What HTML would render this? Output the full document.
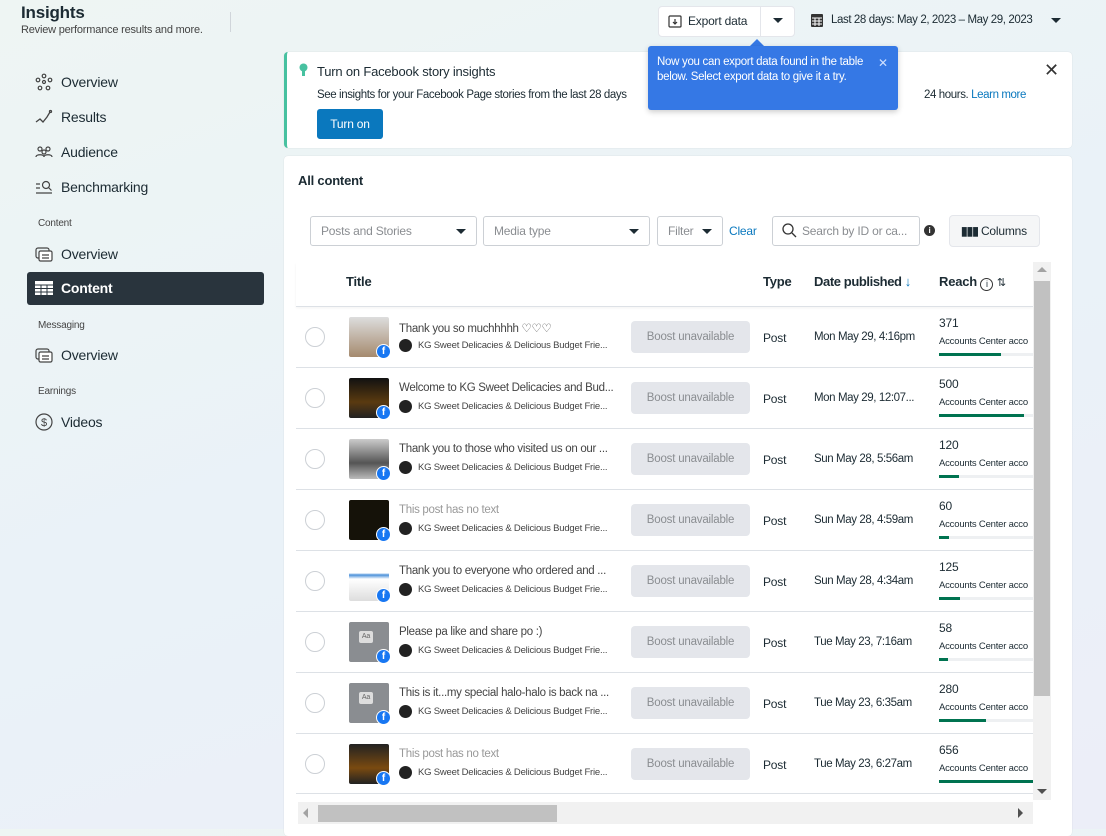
<!DOCTYPE html>
<html><head><meta charset="utf-8"><style>
*{box-sizing:border-box;margin:0;padding:0}
body{width:1106px;height:829px;overflow:hidden;font-family:"Liberation Sans",sans-serif;background:linear-gradient(160deg,#eef5f3 0%,#eaf2f8 50%,#eceef8 100%);color:#1c2b33;position:relative;letter-spacing:-0.2px}
.abs{position:absolute}
.nav{position:absolute;left:35px;font-size:14px;color:#1c2b33;display:flex;align-items:center;gap:8px}
.nav svg{width:18px;height:18px}
.sec{position:absolute;left:38px;font-size:10px;color:#444}
.card{position:absolute;background:#fff;border-radius:4px;box-shadow:0 0 1px rgba(0,0,0,.15)}
.sel{position:absolute;top:216px;height:30px;border:1px solid #ccd0d5;border-radius:3px;font-size:12px;color:#8a8d91;padding:7px 10px;background:#fff}
.sel:after{content:"";position:absolute;right:10px;top:12px;border:5px solid transparent;border-top:5px solid #1c2b33;border-bottom:0}
.row{position:absolute;left:296px;width:737px;height:61px;border-top:1px solid #dde1e6;font-size:12px}
.row .rad{position:absolute;left:9px;top:20px;width:20px;height:20px;border:1px solid #ccd0d5;border-radius:50%}
.row .th{position:absolute;left:53px;top:10px;width:40px;height:40px;border-radius:2px}
.row .fb{position:absolute;left:80px;top:37px;width:15px;height:15px;border-radius:50%;background:#1877f2;border:1.5px solid #fff;color:#fff;font-size:10px;font-weight:bold;text-align:center;line-height:13px}
.row .t1{position:absolute;left:103px;top:14px;color:#444;white-space:nowrap;font-size:11.5px;letter-spacing:-0.3px}
.row .t1.g{color:#999}
.row .t2{position:absolute;left:103px;top:32px;font-size:9.5px;color:#444;white-space:nowrap;display:flex;align-items:center;gap:6px;letter-spacing:-0.2px}
.row .t2 i{display:inline-block;width:13px;height:13px;border-radius:50%;background:#222}
.row .boost{position:absolute;left:335px;top:14px;width:119px;height:32px;background:#e4e6eb;border-radius:4px;color:#8a8d91;text-align:center;line-height:32px;font-size:11.5px}
.row .ty{position:absolute;left:467px;top:24px;color:#1c2b33}
.row .dt{position:absolute;left:518px;top:24px;color:#1c2b33;white-space:nowrap;font-size:11.5px;letter-spacing:-0.4px}
.row .rc{position:absolute;left:643px;top:9px;color:#1c2b33}
.row .ac{position:absolute;left:643px;top:29px;font-size:9.5px;white-space:nowrap;width:94px;overflow:hidden}
.row .bar{position:absolute;left:643px;top:46px;width:94px;height:3px;background:#eef0f2}
.row .bar b{display:block;height:3px;background:#007350}
</style></head><body>
<div class="abs" style="left:21px;top:3px;font-size:17px;font-weight:bold">Insights</div>
<div class="abs" style="left:21px;top:24px;font-size:11px;color:#444">Review performance results and more.</div>
<div class="abs" style="left:230px;top:12px;width:1px;height:20px;background:#d0d5da"></div>

<div class="nav" style="top:73px"><svg viewBox="0 0 18 18" fill="none" stroke="#444" stroke-width="1.2"><circle cx="9" cy="3" r="1.8"/><circle cx="3" cy="7" r="1.8"/><circle cx="15" cy="7" r="1.8"/><circle cx="5" cy="15" r="1.8"/><circle cx="13" cy="15" r="1.8"/><circle cx="9" cy="9" r="1.5"/></svg><span>Overview</span></div>
<div class="nav" style="top:108px"><svg viewBox="0 0 18 18" fill="none" stroke="#444" stroke-width="1.3"><path d="M1 14l4-3 3 3 4-5 3-5"/><circle cx="15.5" cy="3.5" r="1"/></svg><span>Results</span></div>
<div class="nav" style="top:143px"><svg viewBox="0 0 18 18" fill="none" stroke="#444" stroke-width="1.2"><circle cx="5" cy="6" r="2"/><circle cx="13" cy="6" r="2"/><circle cx="9" cy="9" r="2"/><path d="M1 14c0-3 8-3 8 0M9 14c0-3 8-3 8 0"/></svg><span>Audience</span></div>
<div class="nav" style="top:178px"><svg viewBox="0 0 18 18" fill="none" stroke="#444" stroke-width="1.2"><path d="M1 6h4M1 10h4M1 15h16"/><circle cx="11" cy="7" r="3.5"/><path d="M13.5 9.5l3 3"/></svg><span>Benchmarking</span></div>
<div class="sec" style="top:218px">Content</div>
<div class="nav" style="top:245px"><svg viewBox="0 0 18 18" fill="none" stroke="#444" stroke-width="1.2"><rect x="1" y="3" width="13" height="10" rx="2"/><rect x="4" y="6" width="13" height="10" rx="1.5" fill="#fff"/><path d="M7 10h7M7 13h7"/></svg><span>Overview</span></div>
<div class="abs" style="left:27px;top:272px;width:237px;height:33px;background:#29343d;border-radius:3px"></div>
<div class="nav" style="top:279px;color:#fff;font-weight:bold"><svg viewBox="0 0 18 18"><rect x="0" y="2" width="18" height="14" fill="#fff"/><path d="M0 6h18M0 9.5h18M0 13h18M6 6v10M12 6v10" stroke="#29343d" stroke-width="1"/></svg><span>Content</span></div>
<div class="sec" style="top:320px">Messaging</div>
<div class="nav" style="top:346px"><svg viewBox="0 0 18 18" fill="none" stroke="#444" stroke-width="1.2"><rect x="1" y="3" width="13" height="10" rx="2"/><rect x="4" y="6" width="13" height="10" rx="1.5" fill="#fff"/><path d="M7 10h7M7 13h7"/></svg><span>Overview</span></div>
<div class="sec" style="top:386px">Earnings</div>
<div class="nav" style="top:413px"><svg viewBox="0 0 18 18" fill="none" stroke="#444" stroke-width="1.2"><circle cx="9" cy="9" r="8"/><text x="9" y="13" font-size="11" text-anchor="middle" fill="#444" stroke="none" font-family="Liberation Sans">$</text></svg><span>Videos</span></div>

<div class="abs" style="left:658px;top:6px;width:137px;height:31px;background:#fff;border:1px solid #e4e6eb;border-radius:4px"></div>
<div class="abs" style="left:760px;top:6px;width:1px;height:31px;background:#e4e6eb"></div>
<svg class="abs" style="left:668px;top:14px" width="14" height="14" viewBox="0 0 14 14" fill="none" stroke="#333" stroke-width="1.2"><rect x="1" y="2" width="12" height="11" rx="1"/><path d="M7 5v5M5 8l2 2 2-2"/></svg>
<div class="abs" style="left:688px;top:14px;font-size:12px;color:#1c2b33">Export data</div>
<div class="abs" style="left:773px;top:18px;border:5px solid transparent;border-top:5px solid #1c2b33"></div>
<svg class="abs" style="left:811px;top:13px" width="12" height="14" viewBox="0 0 12 14"><rect x="0" y="1" width="12" height="13" rx="1" fill="#333"/><path d="M1 5h10M1 8h10M1 11h10M4 5v8M8 5v8" stroke="#fff" stroke-width="1"/></svg>
<div class="abs" style="left:831px;top:14px;font-size:11.5px;color:#1c2b33;letter-spacing:-0.4px">Last 28 days: May 2, 2023 – May 29, 2023</div>
<div class="abs" style="left:1051px;top:18px;border:5px solid transparent;border-top:5px solid #1c2b33"></div>

<div class="card" style="left:284px;top:52px;width:788px;height:96px;border-left:3px solid #47c1a0"></div>
<svg class="abs" style="left:299px;top:63px" width="9" height="14" viewBox="0 0 9 14"><circle cx="4.5" cy="4.5" r="4" fill="#47c1a0"/><rect x="3" y="8" width="3" height="5" fill="#47c1a0"/></svg>
<div class="abs" style="left:317px;top:64px;font-size:13px;color:#1c2b33">Turn on Facebook story insights</div>
<div class="abs" style="left:317px;top:89px;font-size:11.5px;color:#1c2b33;letter-spacing:-0.4px">See insights for your Facebook Page stories from the last 28 days</div>
<div class="abs" style="left:924px;top:89px;font-size:11.5px;color:#1c2b33;letter-spacing:-0.4px">24 hours. <span style="color:#0a78be">Learn more</span></div>
<div class="abs" style="left:317px;top:109px;width:66px;height:30px;background:#0a78be;border-radius:3px;color:#fff;font-size:12px;text-align:center;line-height:30px">Turn on</div>
<div class="abs" style="left:1044px;top:60px;font-size:18px;color:#333">✕</div>

<div class="abs" style="left:750px;top:39px;width:0;height:0;border:7px solid transparent;border-bottom:7px solid #3578e5;border-top:0"></div>
<div class="abs" style="left:648px;top:46px;width:250px;height:64px;background:#3578e5;border-radius:3px;box-shadow:0 2px 6px rgba(0,0,0,.2);color:#fff;font-size:11.5px;line-height:15px;padding:9px 30px 0 9px;letter-spacing:-0.3px">Now you can export data found in the table below. Select export data to give it a try.</div>
<div class="abs" style="left:878px;top:56px;color:#cfe0ff;font-size:12px">✕</div>

<div class="card" style="left:284px;top:156px;width:788px;height:680px"></div>
<div class="abs" style="left:298px;top:173px;font-size:13px;font-weight:bold">All content</div>
<div class="sel" style="left:310px;width:167px">Posts and Stories</div>
<div class="sel" style="left:483px;width:167px">Media type</div>
<div class="sel" style="left:657px;width:66px">Filter</div>
<div class="abs" style="left:729px;top:224px;font-size:12px;color:#0a78be">Clear</div>
<div class="abs" style="left:772px;top:216px;width:148px;height:30px;border:1px solid #ccd0d5;border-radius:3px;background:#fff"></div>
<svg class="abs" style="left:781px;top:222px" width="16" height="16" viewBox="0 0 16 16" fill="none" stroke="#333" stroke-width="1.3"><circle cx="7" cy="7" r="5"/><path d="M11 11l4 4"/></svg>
<div class="abs" style="left:802px;top:224px;font-size:12px;color:#8a8d91">Search by ID or ca...</div>
<div class="abs" style="left:924px;top:225px;width:11px;height:11px;border-radius:50%;background:#333;color:#fff;font-size:8px;font-weight:bold;text-align:center;line-height:11px">i</div>
<div class="abs" style="left:949px;top:215px;width:91px;height:32px;background:#f5f6f7;border:1px solid #e4e6eb;border-radius:4px;font-size:12px;color:#1c2b33;padding:8px 0 0 11px"><b style="letter-spacing:-1px">▮▮▮</b> Columns</div>

<div class="abs" style="left:296px;top:262px;width:737px;height:44px;box-shadow:0 2px 3px rgba(0,0,0,.05)"></div>
<div class="abs" style="left:346px;top:274px;font-size:13px;font-weight:bold">Title</div>
<div class="abs" style="left:763px;top:274px;font-size:13px;font-weight:bold">Type</div>
<div class="abs" style="left:814px;top:274px;font-size:13px;font-weight:bold;letter-spacing:-0.4px">Date published <span style="color:#0a78be;font-weight:normal">↓</span></div>
<div class="abs" style="left:939px;top:274px;font-size:13px;font-weight:bold">Reach <span style="display:inline-block;width:13px;height:13px;border:1px solid #333;border-radius:50%;font-size:9px;text-align:center;line-height:11px;font-weight:normal;vertical-align:-1px">i</span> <span style="font-weight:normal;font-size:11px">⇅</span></div>

<div class="row" style="top:306px"><div class="rad"></div><div class="th" style="background:linear-gradient(#ddd,#a58a6e)"></div><div class="fb">f</div><div class="t1">Thank you so muchhhhh ♡♡♡</div><div class="t2"><i></i>KG Sweet Delicacies &amp; Delicious Budget Frie...</div><div class="boost">Boost unavailable</div><div class="ty">Post</div><div class="dt">Mon May 29, 4:16pm</div><div class="rc">371</div><div class="ac">Accounts Center acco</div><div class="bar"><b style="width:62px"></b></div></div>
<div class="row" style="top:367px"><div class="rad"></div><div class="th" style="background:linear-gradient(#111,#5a3a10 60%,#222)"></div><div class="fb">f</div><div class="t1">Welcome to KG Sweet Delicacies and Bud...</div><div class="t2"><i></i>KG Sweet Delicacies &amp; Delicious Budget Frie...</div><div class="boost">Boost unavailable</div><div class="ty">Post</div><div class="dt">Mon May 29, 12:07...</div><div class="rc">500</div><div class="ac">Accounts Center acco</div><div class="bar"><b style="width:85px"></b></div></div>
<div class="row" style="top:428px"><div class="rad"></div><div class="th" style="background:linear-gradient(#ccc,#555 60%,#bbb)"></div><div class="fb">f</div><div class="t1">Thank you to those who visited us on our ...</div><div class="t2"><i></i>KG Sweet Delicacies &amp; Delicious Budget Frie...</div><div class="boost">Boost unavailable</div><div class="ty">Post</div><div class="dt">Sun May 28, 5:56am</div><div class="rc">120</div><div class="ac">Accounts Center acco</div><div class="bar"><b style="width:20px"></b></div></div>
<div class="row" style="top:489px"><div class="rad"></div><div class="th" style="background:#151209"></div><div class="fb">f</div><div class="t1 g">This post has no text</div><div class="t2"><i></i>KG Sweet Delicacies &amp; Delicious Budget Frie...</div><div class="boost">Boost unavailable</div><div class="ty">Post</div><div class="dt">Sun May 28, 4:59am</div><div class="rc">60</div><div class="ac">Accounts Center acco</div><div class="bar"><b style="width:10px"></b></div></div>
<div class="row" style="top:550px"><div class="rad"></div><div class="th" style="background:linear-gradient(#fff 30%,#4a90d9 35%,#fff 45%,#ddd)"></div><div class="fb">f</div><div class="t1">Thank you to everyone who ordered and ...</div><div class="t2"><i></i>KG Sweet Delicacies &amp; Delicious Budget Frie...</div><div class="boost">Boost unavailable</div><div class="ty">Post</div><div class="dt">Sun May 28, 4:34am</div><div class="rc">125</div><div class="ac">Accounts Center acco</div><div class="bar"><b style="width:21px"></b></div></div>
<div class="row" style="top:611px"><div class="rad"></div><div class="th" style="background:#8a8d91"></div><div class="fb">f</div><div class="t1">Please pa like and share po :)</div><div class="t2"><i></i>KG Sweet Delicacies &amp; Delicious Budget Frie...</div><div class="boost">Boost unavailable</div><div class="ty">Post</div><div class="dt">Tue May 23, 7:16am</div><div class="rc">58</div><div class="ac">Accounts Center acco</div><div class="bar"><b style="width:9px"></b></div></div>
<div class="row" style="top:672px"><div class="rad"></div><div class="th" style="background:#8a8d91"></div><div class="fb">f</div><div class="t1">This is it...my special halo-halo is back na ...</div><div class="t2"><i></i>KG Sweet Delicacies &amp; Delicious Budget Frie...</div><div class="boost">Boost unavailable</div><div class="ty">Post</div><div class="dt">Tue May 23, 6:35am</div><div class="rc">280</div><div class="ac">Accounts Center acco</div><div class="bar"><b style="width:47px"></b></div></div>
<div class="row" style="top:733px;border-bottom:1px solid #dde1e6"><div class="rad"></div><div class="th" style="background:linear-gradient(#222,#7a4a10 60%,#222)"></div><div class="fb">f</div><div class="t1 g">This post has no text</div><div class="t2"><i></i>KG Sweet Delicacies &amp; Delicious Budget Frie...</div><div class="boost">Boost unavailable</div><div class="ty">Post</div><div class="dt">Tue May 23, 6:27am</div><div class="rc">656</div><div class="ac">Accounts Center acco</div><div class="bar"><b style="width:94px"></b></div></div>
<div class="abs" style="left:359px;top:631px;width:14px;height:12px;border-radius:2px;background:#ddd;font-size:7px;color:#666;text-align:center;line-height:12px">Aa</div>
<div class="abs" style="left:359px;top:692px;width:14px;height:12px;border-radius:2px;background:#ddd;font-size:7px;color:#666;text-align:center;line-height:12px">Aa</div>

<div class="abs" style="left:1033px;top:262px;width:18px;height:538px;background:#f1f1f1"></div>
<div class="abs" style="left:1034px;top:281px;width:16px;height:415px;background:#c1c1c1"></div>
<div class="abs" style="left:1037px;top:267px;border:5px solid transparent;border-bottom:5px solid #a3a3a3;border-top:0"></div>
<div class="abs" style="left:1037px;top:789px;border:5px solid transparent;border-top:5px solid #505050;border-bottom:0"></div>
<div class="abs" style="left:298px;top:802px;width:735px;height:22px;background:#f1f1f1"></div>
<div class="abs" style="left:318px;top:805px;width:239px;height:17px;background:#c1c1c1"></div>
<div class="abs" style="left:303px;top:808px;border:5px solid transparent;border-right:5px solid #a3a3a3;border-left:0"></div>
<div class="abs" style="left:1018px;top:808px;border:5px solid transparent;border-left:5px solid #505050;border-right:0"></div>
</body></html>
